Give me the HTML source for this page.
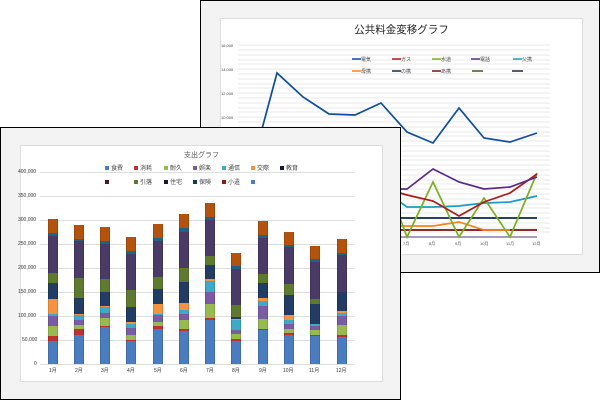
<!DOCTYPE html>
<html><head><meta charset="utf-8"><style>
*{margin:0;padding:0;box-sizing:border-box}
body{width:600px;height:400px;background:#fff;position:relative;overflow:hidden;font-family:"Liberation Sans","Noto Sans CJK JP",sans-serif}
.win{position:absolute;background:#f3f3f3;border:1.5px solid #000}
.inner{position:absolute;background:#fff;border:1px solid #dcdcdc}
.t{position:absolute;font-size:5px;color:#333;white-space:nowrap}
.bar{position:absolute;bottom:36px;width:10px;display:flex;flex-direction:column-reverse}
.bar div{width:100%;border-left:1px solid rgba(0,0,0,.12);border-right:1px solid rgba(0,0,0,.12)}
.a{background:#4a7cc0}.b{background:#c0302e}.c{background:#98bb50}.d{background:#7b5aa6}.e{background:#3fa9c8}.f{background:#f7923e}.g{background:#223c66}.h{background:#5e7a2e}.i{background:#4a3a66}.j{background:#1f6488}.k{background:#b4530e}
.lg{position:absolute;font-size:6px;color:#444;white-space:nowrap;line-height:6px}
.lg i{display:inline-block;width:4px;height:4px;margin-right:2px;vertical-align:0}
.gl{position:absolute;height:1px;background:#dedede}
</style></head><body>

<div class="win" style="left:200px;top:0;width:400px;height:273px"></div>
<div class="inner" style="left:220px;top:18px;width:363px;height:237px"></div>
<div style="position:absolute;left:220px;top:22px;width:363px;text-align:center;font-size:10.5px;color:#222">公共料金変移グラフ</div>
<svg style="position:absolute;left:0;top:0" width="600" height="400">
<g stroke="#e2e2e2" stroke-width="0.7">
<line x1="238" y1="45" x2="550" y2="45"/><line x1="238" y1="50" x2="550" y2="50"/><line x1="238" y1="55" x2="550" y2="55"/><line x1="238" y1="60" x2="550" y2="60"/><line x1="238" y1="64" x2="550" y2="64"/><line x1="238" y1="69" x2="550" y2="69"/><line x1="238" y1="74" x2="550" y2="74"/><line x1="238" y1="79" x2="550" y2="79"/><line x1="238" y1="84" x2="550" y2="84"/><line x1="238" y1="88" x2="550" y2="88"/><line x1="238" y1="93" x2="550" y2="93"/><line x1="238" y1="98" x2="550" y2="98"/><line x1="238" y1="103" x2="550" y2="103"/><line x1="238" y1="108" x2="550" y2="108"/><line x1="238" y1="112" x2="550" y2="112"/><line x1="238" y1="117" x2="550" y2="117"/><line x1="238" y1="122" x2="550" y2="122"/><line x1="238" y1="127" x2="550" y2="127"/><line x1="238" y1="132" x2="550" y2="132"/><line x1="238" y1="136" x2="550" y2="136"/><line x1="238" y1="141" x2="550" y2="141"/><line x1="238" y1="146" x2="550" y2="146"/><line x1="238" y1="151" x2="550" y2="151"/><line x1="238" y1="156" x2="550" y2="156"/><line x1="238" y1="160" x2="550" y2="160"/><line x1="238" y1="165" x2="550" y2="165"/><line x1="238" y1="170" x2="550" y2="170"/><line x1="238" y1="175" x2="550" y2="175"/><line x1="238" y1="180" x2="550" y2="180"/><line x1="238" y1="184" x2="550" y2="184"/><line x1="238" y1="189" x2="550" y2="189"/><line x1="238" y1="194" x2="550" y2="194"/><line x1="238" y1="199" x2="550" y2="199"/><line x1="238" y1="204" x2="550" y2="204"/><line x1="238" y1="208" x2="550" y2="208"/><line x1="238" y1="213" x2="550" y2="213"/><line x1="238" y1="218" x2="550" y2="218"/><line x1="238" y1="223" x2="550" y2="223"/><line x1="238" y1="228" x2="550" y2="228"/><line x1="238" y1="232" x2="550" y2="232"/>
</g>
<g fill="none" stroke-width="1.7">
<polyline stroke="#9a8fb5" points="400,237 537,237"/>
<polyline stroke="#7a0f0f" points="400,230 537,230"/>
<polyline stroke="#0f2550" points="400,218 537,218"/>
<polyline stroke="#f58220" points="400,226 433,226 459,222 484,230 510,230"/>
<polyline stroke="#1e9ac0" points="400,202 407,207 433,207 459,206 484,203 510,202 537,196"/>
<polyline stroke="#7ab020" points="400,218 407,237 433,182 459,237 484,198 510,237 537,173"/>
<polyline stroke="#b01818" points="400,193 407,195 433,201 459,216 484,202 510,193 537,174"/>
<polyline stroke="#5a2a8a" points="400,189 407,189 433,169 459,182 484,189 510,187 537,177"/>
<polyline stroke="#0e4da0" points="251,170 277,73 303,97 329,114 355,115 381,103 407,132 433,143 459,108 484,138 510,142 537,133"/>
</g>
<g stroke-width="1.5">
<line x1="352" y1="59" x2="361" y2="59" stroke="#0e4da0"/><line x1="392" y1="59" x2="401" y2="59" stroke="#b01818"/><line x1="432" y1="59" x2="441" y2="59" stroke="#7ab020"/><line x1="471" y1="59" x2="480" y2="59" stroke="#5a2a8a"/><line x1="513" y1="59" x2="522" y2="59" stroke="#1e9ac0"/>
<line x1="352" y1="71" x2="361" y2="71" stroke="#f58220"/><line x1="392" y1="71" x2="401" y2="71" stroke="#0f2550"/><line x1="432" y1="71" x2="441" y2="71" stroke="#7a0f0f"/><line x1="472" y1="71" x2="483" y2="71" stroke="#3a5a10"/><line x1="512" y1="71" x2="523" y2="71" stroke="#2a1a40"/>
</g>
<g font-size="5" fill="#444" font-family="Liberation Sans,Noto Sans CJK JP,sans-serif">
<text x="361" y="61">電気</text><text x="401" y="61">ガス</text><text x="441" y="61">水道</text><text x="480" y="61">電話</text><text x="522" y="61">父携</text>
<text x="361" y="73">母携</text><text x="401" y="73">の携</text><text x="441" y="73">あ携</text>
<text x="221" y="47" font-size="4">16,000</text><text x="221" y="71" font-size="4">14,000</text><text x="221" y="95" font-size="4">12,000</text><text x="221" y="119" font-size="4">10,000</text>
<text x="403" y="245" font-size="4">7月</text><text x="429" y="245" font-size="4">8月</text><text x="455" y="245" font-size="4">9月</text><text x="480" y="245" font-size="4">10月</text><text x="506" y="245" font-size="4">11月</text><text x="532" y="245" font-size="4">12月</text>
</g>
</svg>

<div class="win" style="left:0;top:127px;width:401px;height:273px"></div>
<div class="inner" style="left:20px;top:145px;width:363px;height:237px"></div>
<div style="position:absolute;left:20px;top:150px;width:363px;text-align:center;font-size:7px;color:#555">支出グラフ</div>

<div class="gl" style="left:40px;width:315px;top:172px"></div>
<div class="gl" style="left:40px;width:315px;top:196px"></div>
<div class="gl" style="left:40px;width:315px;top:220px"></div>
<div class="gl" style="left:40px;width:315px;top:244px"></div>
<div class="gl" style="left:40px;width:315px;top:268px"></div>
<div class="gl" style="left:40px;width:315px;top:292px"></div>
<div class="gl" style="left:40px;width:315px;top:316px"></div>
<div class="gl" style="left:40px;width:315px;top:340px"></div>
<div class="gl" style="left:40px;width:315px;top:364px"></div>
<div class="t" style="left:18px;top:169px">400,000</div>
<div class="t" style="left:18px;top:193px">350,000</div>
<div class="t" style="left:18px;top:217px">300,000</div>
<div class="t" style="left:18px;top:241px">250,000</div>
<div class="t" style="left:18px;top:265px">200,000</div>
<div class="t" style="left:18px;top:289px">150,000</div>
<div class="t" style="left:18px;top:313px">100,000</div>
<div class="t" style="left:22px;top:337px">50,000</div>
<div class="t" style="left:34px;top:361px">0</div>

<div class="lg" style="left:105px;top:166px"><i class="a"></i>食費</div>
<div class="lg" style="left:134px;top:166px"><i class="b"></i>消耗</div>
<div class="lg" style="left:164px;top:166px"><i class="c"></i>耐久</div>
<div class="lg" style="left:193px;top:166px"><i class="d"></i>娯楽</div>
<div class="lg" style="left:222px;top:166px"><i class="e"></i>通信</div>
<div class="lg" style="left:251px;top:166px"><i class="f"></i>交際</div>
<div class="lg" style="left:280px;top:166px"><i style="background:#101840"></i>教育</div>
<div class="lg" style="left:105px;top:180px"><i style="background:#4a1a22"></i></div>
<div class="lg" style="left:134px;top:180px"><i class="h"></i>引落</div>
<div class="lg" style="left:164px;top:180px"><i style="background:#1a1630"></i>住宅</div>
<div class="lg" style="left:193px;top:180px"><i style="background:#103a55"></i>保険</div>
<div class="lg" style="left:222px;top:180px"><i style="background:#8a1a0a"></i>小遣</div>
<div class="lg" style="left:251px;top:180px"><i class="a"></i></div>

<div class="bar" style="left:48px"><div class="a" style="height:23.3px"></div><div class="b" style="height:4.3px"></div><div class="c" style="height:10.3px"></div><div class="d" style="height:9.7px"></div><div class="e" style="height:2.7px"></div><div class="f" style="height:15px"></div><div class="g" style="height:15.7px"></div><div class="h" style="height:10.3px"></div><div class="i" style="height:36.3px"></div><div class="j" style="height:3px"></div><div class="k" style="height:14.3px"></div></div>
<div class="bar" style="left:74px"><div class="a" style="height:29.3px"></div><div class="b" style="height:5.7px"></div><div class="c" style="height:4.3px"></div><div class="d" style="height:5px"></div><div class="e" style="height:5px"></div><div class="f" style="height:1px"></div><div class="g" style="height:16px"></div><div class="h" style="height:19.7px"></div><div class="i" style="height:36.7px"></div><div class="j" style="height:2.3px"></div><div class="k" style="height:14px"></div></div>
<div class="bar" style="left:100px"><div class="a" style="height:37px"></div><div class="b" style="height:1px"></div><div class="c" style="height:7.7px"></div><div class="d" style="height:5.7px"></div><div class="e" style="height:6px"></div><div class="f" style="height:1px"></div><div class="g" style="height:13.3px"></div><div class="h" style="height:13.3px"></div><div class="i" style="height:35px"></div><div class="j" style="height:2.7px"></div><div class="k" style="height:14px"></div></div>
<div class="bar" style="left:126px"><div class="a" style="height:22.7px"></div><div class="b" style="height:1px"></div><div class="c" style="height:5px"></div><div class="d" style="height:7.3px"></div><div class="e" style="height:4px"></div><div class="f" style="height:2px"></div><div class="g" style="height:15.3px"></div><div class="h" style="height:16.7px"></div><div class="i" style="height:36px"></div><div class="j" style="height:2.7px"></div><div class="k" style="height:14px"></div></div>
<div class="bar" style="left:153px"><div class="a" style="height:35px"></div><div class="b" style="height:2.7px"></div><div class="c" style="height:4.7px"></div><div class="d" style="height:6.7px"></div><div class="e" style="height:1px"></div><div class="f" style="height:10px"></div><div class="g" style="height:15.3px"></div><div class="h" style="height:11.7px"></div><div class="i" style="height:36.3px"></div><div class="j" style="height:2.3px"></div><div class="k" style="height:14px"></div></div>
<div class="bar" style="left:179px"><div class="a" style="height:33.3px"></div><div class="b" style="height:1.3px"></div><div class="c" style="height:9px"></div><div class="d" style="height:6px"></div><div class="e" style="height:4.7px"></div><div class="f" style="height:6.7px"></div><div class="g" style="height:21.3px"></div><div class="h" style="height:14px"></div><div class="i" style="height:36px"></div><div class="j" style="height:3.3px"></div><div class="k" style="height:14px"></div></div>
<div class="bar" style="left:205px"><div class="a" style="height:44.3px"></div><div class="b" style="height:2px"></div><div class="c" style="height:14px"></div><div class="d" style="height:11.7px"></div><div class="e" style="height:11.3px"></div><div class="f" style="height:1.7px"></div><div class="g" style="height:14px"></div><div class="h" style="height:9.3px"></div><div class="i" style="height:36px"></div><div class="j" style="height:2.7px"></div><div class="k" style="height:14px"></div></div>
<div class="bar" style="left:231px"><div class="a" style="height:23.3px"></div><div class="b" style="height:2px"></div><div class="c" style="height:4.7px"></div><div class="d" style="height:4px"></div><div class="e" style="height:10px"></div><div class="f" style="height:0.7px"></div><div class="g" style="height:2.7px"></div><div class="h" style="height:11.7px"></div><div class="i" style="height:36px"></div><div class="j" style="height:2.7px"></div><div class="k" style="height:13.3px"></div></div>
<div class="bar" style="left:258px"><div class="a" style="height:34.3px"></div><div class="b" style="height:1px"></div><div class="c" style="height:10px"></div><div class="d" style="height:12.7px"></div><div class="e" style="height:4.7px"></div><div class="f" style="height:3.3px"></div><div class="g" style="height:15px"></div><div class="h" style="height:9.3px"></div><div class="i" style="height:36px"></div><div class="j" style="height:2.7px"></div><div class="k" style="height:14px"></div></div>
<div class="bar" style="left:284px"><div class="a" style="height:29.3px"></div><div class="b" style="height:1.3px"></div><div class="c" style="height:4px"></div><div class="d" style="height:5px"></div><div class="e" style="height:4px"></div><div class="f" style="height:5px"></div><div class="g" style="height:20.7px"></div><div class="h" style="height:10.7px"></div><div class="i" style="height:36.7px"></div><div class="j" style="height:2.7px"></div><div class="k" style="height:12.7px"></div></div>
<div class="bar" style="left:310px"><div class="a" style="height:27.7px"></div><div class="b" style="height:1px"></div><div class="c" style="height:5px"></div><div class="d" style="height:4px"></div><div class="e" style="height:2.7px"></div><div class="g" style="height:19.3px"></div><div class="h" style="height:5.3px"></div><div class="i" style="height:36.7px"></div><div class="j" style="height:3.3px"></div><div class="k" style="height:13.3px"></div></div>
<div class="bar" style="left:337px"><div class="a" style="height:26.7px"></div><div class="b" style="height:2.7px"></div><div class="c" style="height:10px"></div><div class="d" style="height:8.3px"></div><div class="e" style="height:3.3px"></div><div class="f" style="height:2px"></div><div class="g" style="height:19px"></div><div class="i" style="height:36.7px"></div><div class="j" style="height:2.7px"></div><div class="k" style="height:13.3px"></div></div>

<div class="t" style="left:49px;top:367px">1月</div>
<div class="t" style="left:75px;top:367px">2月</div>
<div class="t" style="left:101px;top:367px">3月</div>
<div class="t" style="left:127px;top:367px">4月</div>
<div class="t" style="left:154px;top:367px">5月</div>
<div class="t" style="left:180px;top:367px">6月</div>
<div class="t" style="left:206px;top:367px">7月</div>
<div class="t" style="left:232px;top:367px">8月</div>
<div class="t" style="left:259px;top:367px">9月</div>
<div class="t" style="left:283px;top:367px">10月</div>
<div class="t" style="left:309px;top:367px">11月</div>
<div class="t" style="left:336px;top:367px">12月</div>
</body></html>
